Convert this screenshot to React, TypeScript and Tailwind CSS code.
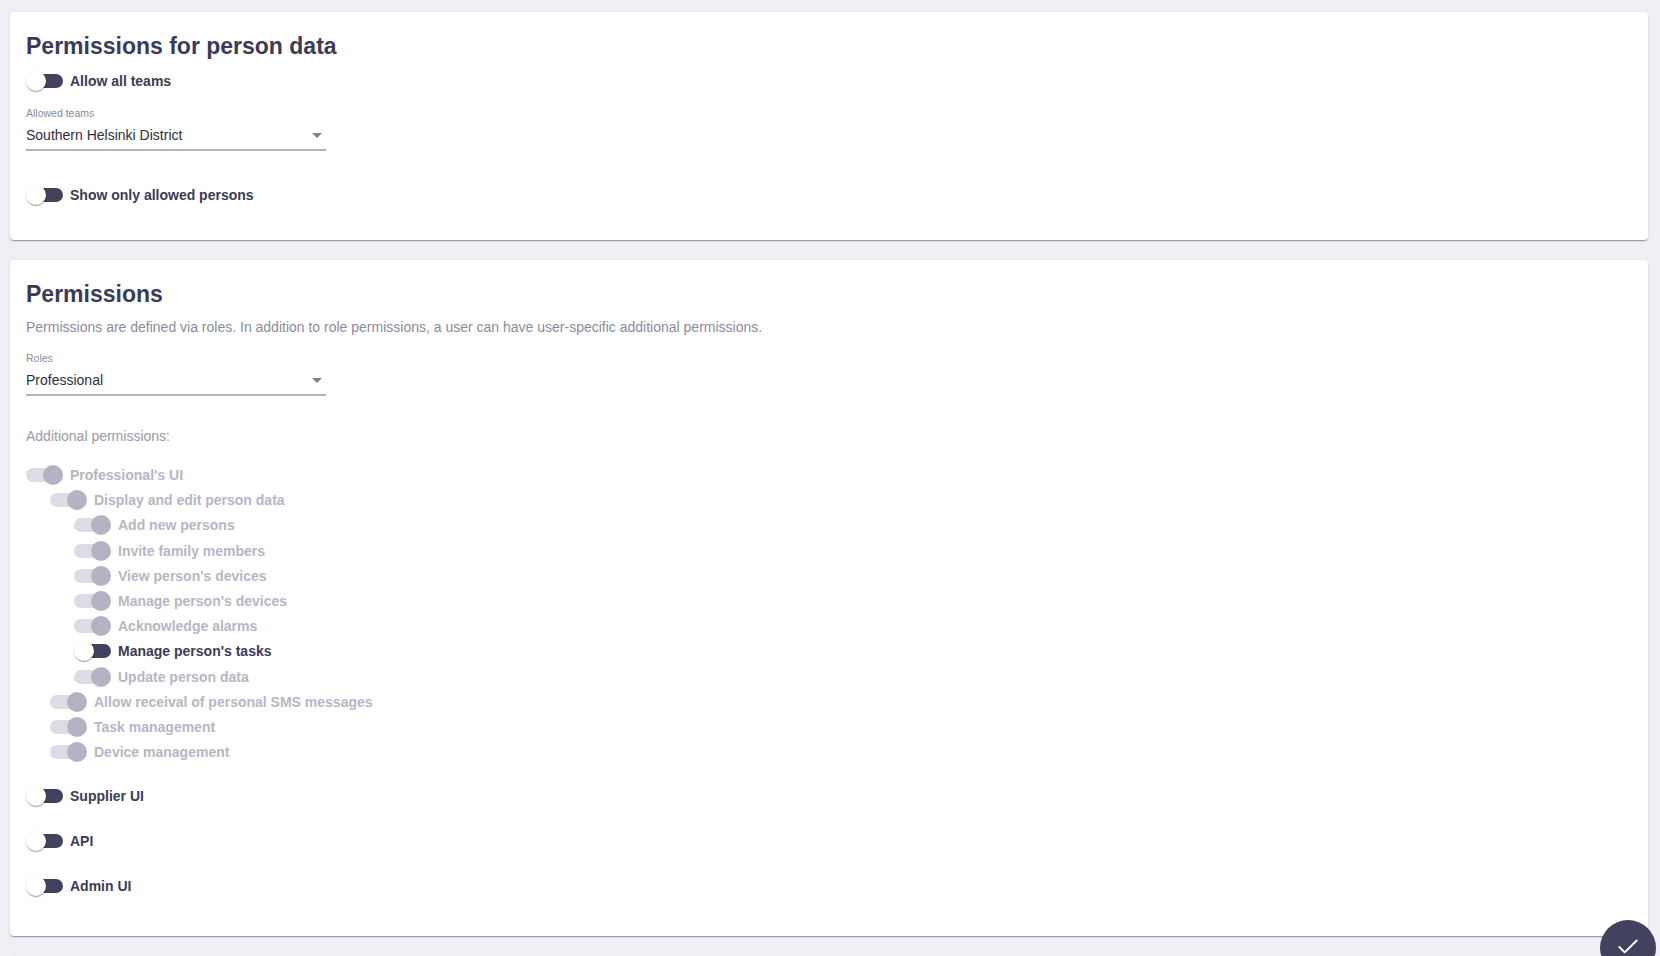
import React from "react";
import { Check } from "lucide-react";

const paperShadow =
  "shadow-[0_2px_1px_-1px_rgba(0,0,0,0.2),0_1px_1px_0_rgba(0,0,0,0.14),0_1px_3px_0_rgba(0,0,0,0.12)]";

function Toggle({ on }: { on: boolean }) {
  return (
    <span className="relative inline-block w-[37px] h-5 shrink-0">
      {on ? (
        <>
          <span className="absolute top-[3px] left-0 right-[3px] h-[14px] rounded-full bg-[#dcdce4]" />
          <span className="absolute top-0 right-0 w-5 h-5 rounded-full bg-[#b3b3c3]" />
        </>
      ) : (
        <>
          <span className="absolute top-[3px] left-[3px] right-0 h-[14px] rounded-full bg-[#42425e]" />
          <span className="absolute top-0 left-0 w-5 h-5 rounded-full bg-white shadow-[0_2px_1px_-1px_rgba(0,0,0,0.2),0_1px_1px_0_rgba(0,0,0,0.14),0_1px_3px_0_rgba(0,0,0,0.12)]" />
        </>
      )}
    </span>
  );
}

function ToggleRow({
  label,
  on = false,
  disabled = false,
  className = "",
}: {
  label: string;
  on?: boolean;
  disabled?: boolean;
  className?: string;
}) {
  return (
    <div className={`flex items-center h-5 ${className}`}>
      <Toggle on={on} />
      <span
        className={`ml-[7px] text-sm leading-5 font-bold whitespace-nowrap ${
          disabled ? "text-[#b6b6c5]" : "text-[#3b3b58]"
        }`}
      >
        {label}
      </span>
    </div>
  );
}

function Select({
  label,
  value,
  className = "",
}: {
  label: string;
  value: string;
  className?: string;
}) {
  return (
    <div className={`w-[300px] ${className}`}>
      <div className="text-[10.5px] leading-[13px] text-[#8a8a9c]">{label}</div>
      <div className="mt-[5px] flex items-center justify-between pb-[4px] border-b-2 border-[#b3b3c3]">
        <span className="text-sm leading-5 text-[#2d2d44]">{value}</span>
        <svg width="10" height="5" viewBox="0 0 10 5" className="mr-[4px] mt-[2px]">
          <path d="M0 0h10L5 5z" fill="#7f7f95" />
        </svg>
      </div>
    </div>
  );
}

type Item = { label: string; level: number; on: boolean };

const tree: Item[] = [
  { label: "Professional's UI", level: 0, on: true },
  { label: "Display and edit person data", level: 1, on: true },
  { label: "Add new persons", level: 2, on: true },
  { label: "Invite family members", level: 2, on: true },
  { label: "View person's devices", level: 2, on: true },
  { label: "Manage person's devices", level: 2, on: true },
  { label: "Acknowledge alarms", level: 2, on: true },
  { label: "Manage person's tasks", level: 2, on: false },
  { label: "Update person data", level: 2, on: true },
  { label: "Allow receival of personal SMS messages", level: 1, on: true },
  { label: "Task management", level: 1, on: true },
  { label: "Device management", level: 1, on: true },
];

export default function App() {
  return (
    <div className="min-h-screen bg-[#efeff5] pt-[12px] pl-[10px] pr-[12px] pb-10 [font-family:'Liberation_Sans',Arial,sans-serif]">
      <div className={`bg-white rounded ${paperShadow} pt-[20px] pb-[35px] px-4`}>
        <h2 className="text-[23px] leading-[28px] font-bold text-[#3b3b58]">
          Permissions for person data
        </h2>
        <ToggleRow className="mt-[11px]" label="Allow all teams" />
        <Select className="mt-[15.5px]" label="Allowed teams" value="Southern Helsinki District" />
        <ToggleRow className="mt-[34.5px]" label="Show only allowed persons" />
      </div>

      <div className={`mt-[20px] bg-white rounded ${paperShadow} pt-[20px] pb-[40px] px-4`}>
        <h2 className="text-[23px] leading-[28px] font-bold text-[#3b3b58]">Permissions</h2>
        <p className="mt-[9px] text-sm leading-5 text-[#8b8b9e]">
          Permissions are defined via roles. In addition to role permissions, a user can have
          user-specific additional permissions.
        </p>
        <Select className="mt-[14.5px]" label="Roles" value="Professional" />
        <div className="mt-[30.5px] text-sm leading-5 text-[#9a9aab]">Additional permissions:</div>
        <div className="mt-[16.5px] flex flex-col">
          {tree.map((it) => (
            <div
              key={it.label}
              className={`h-[25.2px] flex items-center ${
                it.level === 0 ? "pl-0" : it.level === 1 ? "pl-[24px]" : "pl-[48px]"
              }`}
            >
              <ToggleRow label={it.label} on={it.on} disabled={it.on} />
            </div>
          ))}
        </div>
        <ToggleRow className="mt-[21px]" label="Supplier UI" />
        <ToggleRow className="mt-[25px]" label="API" />
        <ToggleRow className="mt-[25px]" label="Admin UI" />
      </div>

      <div className={`mt-[20px] bg-white rounded ${paperShadow} h-[200px]`} />

      <div className="fixed right-[4px] bottom-[-20px] w-14 h-14 rounded-full bg-[#42425e] flex items-center justify-center">
        <Check size={26} strokeWidth={1.8} color="#ffffff" className="mb-[2px]" />
      </div>
    </div>
  );
}
